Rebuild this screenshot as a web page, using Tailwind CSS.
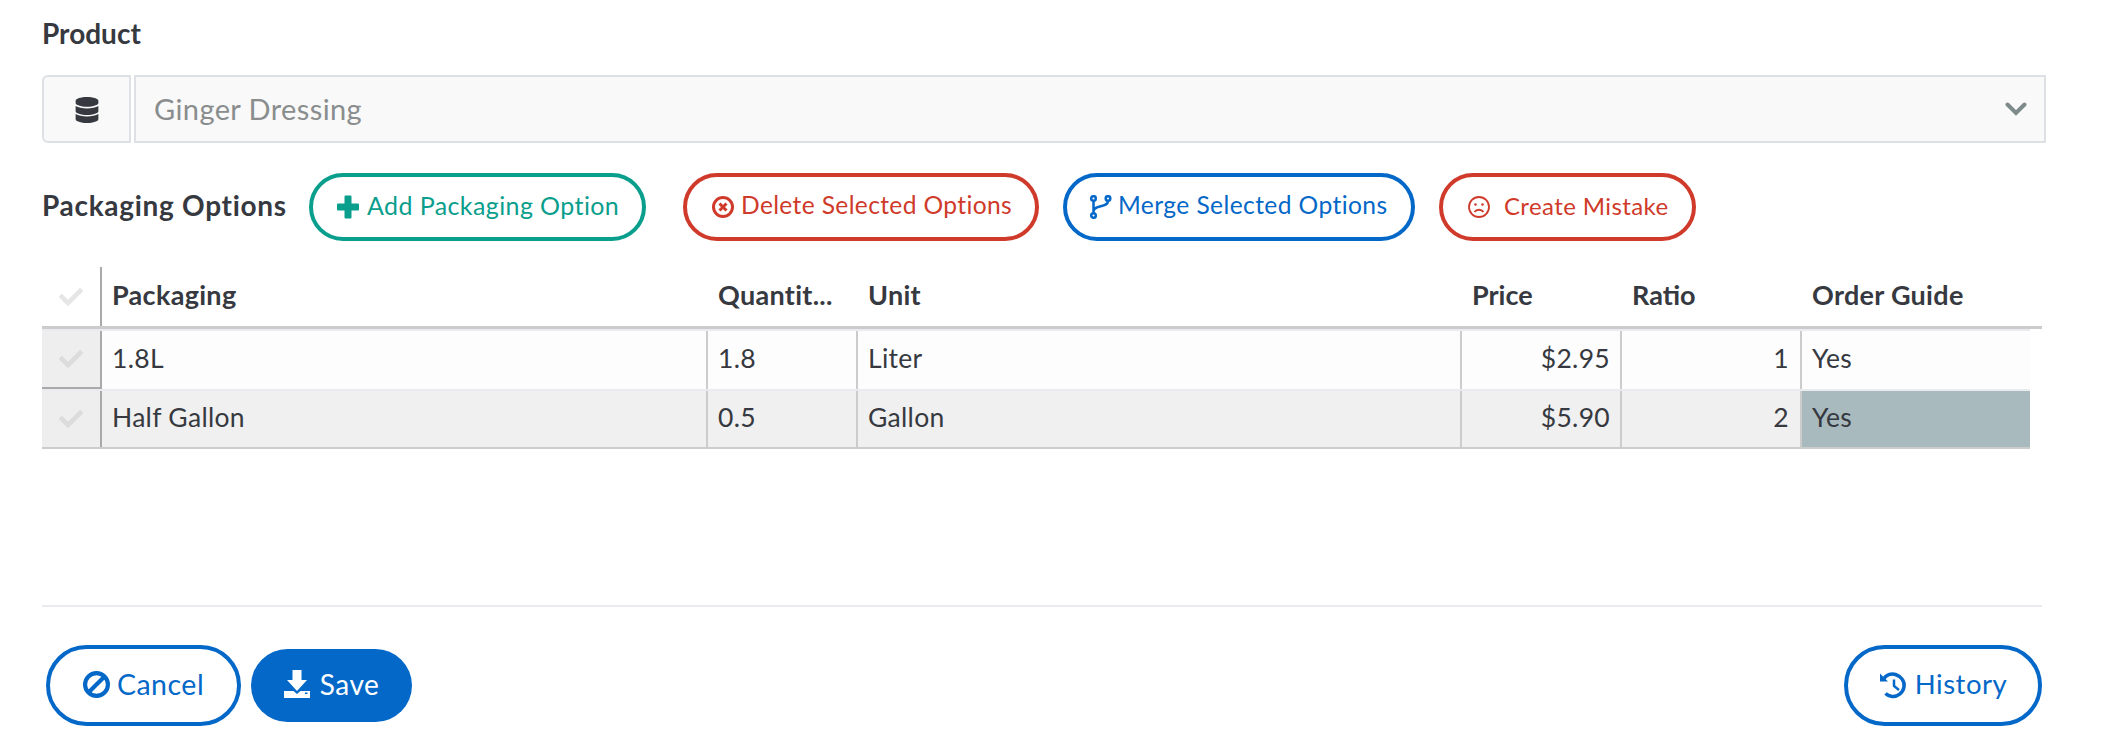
<!DOCTYPE html>
<html lang="en">
<head>
    <meta charset="UTF-8">
    <title>Packaging Options</title>
    <script src="https://cdn.jsdelivr.net/npm/@tailwindcss/browser@4"></script>
</head>
<body class="bg-white font-['Lato',sans-serif] text-[#363940]">
    <div class="w-[2104px] h-[742px] overflow-hidden pl-[42px] pt-[17px]">
        <h2 class="text-[28px] leading-[32px] font-bold">Product</h2>

        <div class="flex w-[2004px] h-[68px] mt-[26px]">
            <div class="w-[89px] flex items-center justify-center bg-[#f9f9f9] border-2 border-[#dde1e5] rounded-l-[6px] pt-[2px]">
                <svg class="w-[24px] h-[26px] fill-[#363940]" viewBox="0 0 448 512"><path d="M448 73.143v45.714C448 159.143 347.667 192 224 192S0 159.143 0 118.857V73.143C0 32.857 100.333 0 224 0s224 32.857 224 73.143zM448 176v102.857C448 319.143 347.667 352 224 352S0 319.143 0 278.857V176c48.125 33.143 136.208 48.572 224 48.572S399.874 209.143 448 176zm0 160v102.857C448 479.143 347.667 512 224 512S0 479.143 0 438.857V336c48.125 33.143 136.208 48.572 224 48.572S399.874 369.143 448 336z"/></svg>
            </div>
            <div class="flex-1 ml-[3px] flex items-center justify-between bg-[#f9f9f9] border-2 border-[#dde1e5] pl-[18px] pr-[17px]">
                <span class="text-[29px] tracking-[0.4px] text-[#8a8d8d]">Ginger Dressing</span>
                <svg class="w-[22px] h-[14px] stroke-[#7f8a8a] fill-none" stroke-width="4" stroke-linecap="round" viewBox="0 0 22 14"><path d="M2.500 2.500 11 11 19.500 2.500"/></svg>
            </div>
        </div>

        <div class="flex items-center h-[68px] mt-[30px]">
            <h3 class="w-[267px] text-[28px] tracking-[0.7px] font-bold pb-[4px]">Packaging Options</h3>
            <button class="w-[337px] h-[68px] flex items-center pl-[24px] pb-[3px] gap-[8px] border-4 border-[#0a9e8c] rounded-full text-[#0a9e8c] text-[25px] tracking-[0.4px]">
                <svg class="w-[22px] h-[24px] fill-[#0a9e8c] mt-[3px]" viewBox="0 0 22 24"><path d="M7.500 1.500Q7.500 0.500 8.500 0.500H13.500Q14.500 0.500 14.500 1.500V8.500H21Q22 8.500 22 9.500V14.500Q22 15.500 21 15.500H14.500V22.500Q14.500 23.500 13.500 23.500H8.500Q7.500 23.500 7.500 22.500V15.500H1Q0 15.500 0 14.500V9.500Q0 8.500 1 8.500H7.500Z"/></svg>
                Add Packaging Option
            </button>
            <button class="w-[356px] h-[68px] ml-[37px] flex items-center pl-[25px] pb-[3px] gap-[7px] border-4 border-[#cf3a2a] rounded-full text-[#cf3a2a] text-[24.600px] tracking-[0.35px]">
                <svg class="w-[22px] h-[22px] stroke-[#cf3a2a] fill-none mt-[3px]" viewBox="0 0 22 22" stroke-width="3"><circle cx="11" cy="11" r="9.500"/><path d="M7.500 7.500 14.500 14.500M14.500 7.500 7.500 14.500"/></svg>
                Delete Selected Options
            </button>
            <button class="w-[352px] h-[68px] ml-[24px] flex items-center pl-[23px] pb-[3px] gap-[6px] border-4 border-[#0468c8] rounded-full text-[#0468c8] text-[24.600px] tracking-[0.4px]">
                <svg class="w-[22px] h-[24px] stroke-[#0468c8] fill-none mt-[3px]" viewBox="0 0 22 24" stroke-width="2.500"><circle cx="3.500" cy="3.500" r="2.300"/><circle cx="3.500" cy="20.500" r="2.300"/><circle cx="18" cy="3.500" r="2.300"/><path d="M3.500 6V18M18 6C18 13 3.500 9.500 3.500 16.500"/></svg>
                Merge Selected Options
            </button>
            <button class="w-[257px] h-[68px] ml-[24px] flex items-center pl-[25px] pb-[3px] gap-[14px] border-4 border-[#cf3a2a] rounded-full text-[#cf3a2a] text-[24px] tracking-[0.4px]">
                <svg class="w-[22px] h-[22px] stroke-[#cf3a2a] fill-none mt-[3px]" viewBox="0 0 22 22" stroke-width="1.800"><circle cx="11" cy="11" r="10"/><circle cx="7.500" cy="8.500" r="1.300" class="fill-[#cf3a2a] stroke-none"/><circle cx="14.500" cy="8.500" r="1.300" class="fill-[#cf3a2a] stroke-none"/><path d="M6.500 16C8.500 13 13.500 13 15.500 16"/></svg>
                Create Mistake
            </button>
        </div>

        <!-- table -->
        <div class="mt-[26px] w-[2000px] text-[26.500px] tracking-[0.3px]">
            <div class="grid grid-cols-[60px_606px_150px_604px_160px_180px_228px_12px] h-[62px] border-b-[3px] border-[#cccccc] font-bold text-[27px]">
                <div class="flex items-center justify-center border-r-2 border-[#a9a9a9]">
                    <svg class="w-[24px] h-[24px] fill-[#e6e6e6]" viewBox="0 0 512 512"><path d="M173.898 439.404l-166.400-166.400c-9.997-9.997-9.997-26.206 0-36.204l36.203-36.204c9.997-9.998 26.207-9.998 36.204 0L192 312.690 432.095 72.596c9.997-9.997 26.207-9.997 36.204 0l36.203 36.204c9.997 9.997 9.997 26.206 0 36.204l-294.400 294.401c-9.998 9.997-26.207 9.997-36.204-.001z"/></svg>
                </div>
                <div class="flex items-center pl-[10px] pb-[3px]">Packaging</div>
                <div class="flex items-center pl-[10px] pb-[3px] whitespace-nowrap overflow-hidden">Quantit...</div>
                <div class="flex items-center pl-[10px] pb-[3px]">Unit</div>
                <div class="flex items-center pl-[10px] pb-[3px] tracking-[0px]">Price</div>
                <div class="flex items-center pl-[10px] pb-[3px] tracking-[0px]">Ratio</div>
                <div class="flex items-center pl-[10px] pb-[3px]">Order Guide</div>
                <div></div>
            </div>
            <div class="grid grid-cols-[60px_606px_150px_604px_160px_180px_228px] w-[1988px] h-[60px] bg-[#fdfdfd] border-t-2 border-[#e9ebee]">
                <div class="flex items-center justify-center bg-[#eeeeee] border-r-2 border-b-2 border-[#a9a9a9]">
                    <svg class="w-[24px] h-[24px] fill-[#dcdcdc]" viewBox="0 0 512 512"><path d="M173.898 439.404l-166.400-166.400c-9.997-9.997-9.997-26.206 0-36.204l36.203-36.204c9.997-9.998 26.207-9.998 36.204 0L192 312.690 432.095 72.596c9.997-9.997 26.207-9.997 36.204 0l36.203 36.204c9.997 9.997 9.997 26.206 0 36.204l-294.400 294.401c-9.998 9.997-26.207 9.997-36.204-.001z"/></svg>
                </div>
                <div class="flex items-center pl-[10px] pb-[3px] border-r-2 border-[#cccccc]">1.8L</div>
                <div class="flex items-center pl-[10px] pb-[3px] border-r-2 border-[#cccccc]">1.8</div>
                <div class="flex items-center pl-[10px] pb-[3px] border-r-2 border-[#cccccc]">Liter</div>
                <div class="flex items-center justify-end pr-[10px] pb-[3px] border-r-2 border-[#cccccc]">$2.95</div>
                <div class="flex items-center justify-end pr-[11px] pb-[3px] border-r-2 border-[#cccccc]">1</div>
                <div class="flex items-center pl-[10px] pb-[3px]">Yes</div>
            </div>
            <div class="grid grid-cols-[60px_606px_150px_604px_160px_180px_228px] w-[1988px] h-[60px] bg-[#f0f0f0] border-t-2 border-b-2 border-t-[#e9ebee] border-b-[#cccccc]">
                <div class="flex items-center justify-center bg-[#eeeeee] border-r-2 border-[#a9a9a9]">
                    <svg class="w-[24px] h-[24px] fill-[#dcdcdc]" viewBox="0 0 512 512"><path d="M173.898 439.404l-166.400-166.400c-9.997-9.997-9.997-26.206 0-36.204l36.203-36.204c9.997-9.998 26.207-9.998 36.204 0L192 312.690 432.095 72.596c9.997-9.997 26.207-9.997 36.204 0l36.203 36.204c9.997 9.997 9.997 26.206 0 36.204l-294.400 294.401c-9.998 9.997-26.207 9.997-36.204-.001z"/></svg>
                </div>
                <div class="flex items-center pl-[10px] pb-[2px] border-r-2 border-[#cccccc]">Half Gallon</div>
                <div class="flex items-center pl-[10px] pb-[2px] border-r-2 border-[#cccccc]">0.5</div>
                <div class="flex items-center pl-[10px] pb-[2px] border-r-2 border-[#cccccc]">Gallon</div>
                <div class="flex items-center justify-end pr-[10px] pb-[2px] border-r-2 border-[#cccccc]">$5.90</div>
                <div class="flex items-center justify-end pr-[11px] pb-[2px] border-r-2 border-[#cccccc]">2</div>
                <div class="flex items-center pl-[10px] pb-[2px] bg-[#a9babe]">Yes</div>
            </div>
        </div>

        <hr class="w-[2000px] mt-[156px] border-t-2 border-[#e9ebee]">

        <div class="flex items-center w-[2000px] mt-[38px]">
            <button class="w-[195px] h-[81px] ml-[4px] flex items-center justify-center pb-[3px] gap-[7px] border-4 border-[#0468c8] rounded-full text-[#0468c8] text-[28.500px] tracking-[0.5px]">
                <svg class="w-[27px] h-[27px] stroke-[#0468c8] fill-none mt-[1px]" viewBox="0 0 26 26" stroke-width="4"><circle cx="13" cy="13" r="11"/><path d="M5.500 20.500 20.500 5.500"/></svg>
                Cancel
            </button>
            <button class="w-[161px] h-[73px] ml-[10px] flex items-center justify-center pb-[3px] gap-[10px] bg-[#0468c8] rounded-full text-white text-[28px] tracking-[0.5px]">
                <svg class="w-[26px] h-[28px] fill-white" viewBox="0 0 26 28"><path d="M8.500 0H17.500V10H23L13 21 3 10H8.500Z"/><path fill-rule="evenodd" d="M0 21H9.500L13 24 16.500 21H26V28H0ZM21 22.500V24H23.500V22.500Z"/></svg>
                Save
            </button>
            <button class="w-[198px] h-[81px] ml-auto flex items-center justify-center pb-[3px] gap-[8px] border-4 border-[#0468c8] rounded-full text-[#0468c8] text-[27.500px] tracking-[0.5px]">
                <svg class="w-[28px] h-[28px] stroke-[#0468c8] fill-none mt-[1px]" viewBox="0 0 28 28" stroke-width="3.500"><path d="M4.500 8C7 4 12 2 16.500 3.500 22 5.500 26 10 25 16 24 22 18.500 26 13 25.500 10 25 8 24 6.500 22.500"/><path d="M1 2.500V10.500H9Z" class="fill-[#0468c8] stroke-none"/><path d="M15 8.500V15L20 19" stroke-width="2.500"/></svg>
                History
            </button>
        </div>
    </div>
</body>
</html>
